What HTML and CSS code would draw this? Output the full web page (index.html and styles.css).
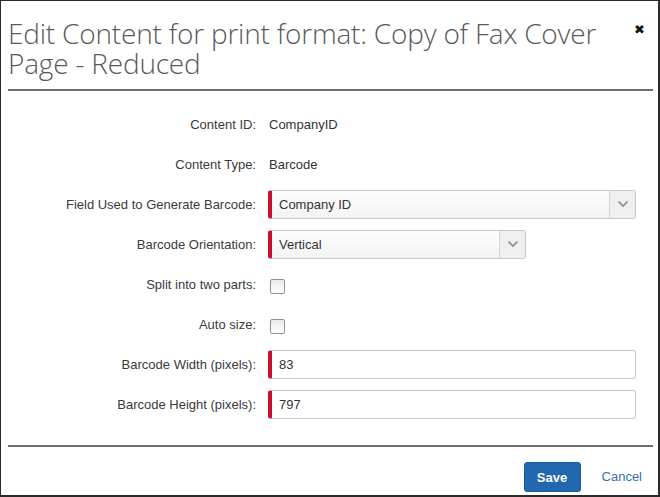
FILE: index.html
```html
<!DOCTYPE html>
<html>
<head>
<meta charset="utf-8">
<link rel="stylesheet" href="styles.css">
</head>
<body>
<div class="dialog">
  <div class="header">
    <h1 class="title">Edit Content for print format: Copy of Fax Cover Page - Reduced</h1>
    <span class="close">&#x2716;</span>
  </div>
  <div class="form">
    <div class="row">
      <div class="label">Content ID:</div>
      <div class="value">CompanyID</div>
    </div>
    <div class="row">
      <div class="label">Content Type:</div>
      <div class="value">Barcode</div>
    </div>
    <div class="row">
      <div class="label">Field Used to Generate Barcode:</div>
      <div class="value">
        <div class="select select-wide">
          <span class="select-text">Company ID</span>
          <span class="select-arrow"><svg width="12" height="8" viewBox="0 0 12 8"><path d="M1.5 1.5 L6 6 L10.5 1.5" fill="none" stroke="#8a8a8a" stroke-width="1.6"/></svg></span>
        </div>
      </div>
    </div>
    <div class="row">
      <div class="label">Barcode Orientation:</div>
      <div class="value">
        <div class="select select-narrow">
          <span class="select-text">Vertical</span>
          <span class="select-arrow"><svg width="12" height="8" viewBox="0 0 12 8"><path d="M1.5 1.5 L6 6 L10.5 1.5" fill="none" stroke="#8a8a8a" stroke-width="1.6"/></svg></span>
        </div>
      </div>
    </div>
    <div class="row">
      <div class="label">Split into two parts:</div>
      <div class="value"><span class="checkbox"></span></div>
    </div>
    <div class="row">
      <div class="label">Auto size:</div>
      <div class="value"><span class="checkbox"></span></div>
    </div>
    <div class="row">
      <div class="label">Barcode Width (pixels):</div>
      <div class="value"><div class="input">83</div></div>
    </div>
    <div class="row">
      <div class="label">Barcode Height (pixels):</div>
      <div class="value"><div class="input">797</div></div>
    </div>
  </div>
  <div class="footer">
    <button class="btn-save">Save</button>
    <span class="btn-cancel">Cancel</span>
  </div>
</div>
</body>
</html>
```
FILE: styles.css
```css
* { box-sizing: border-box; }
html, body { margin: 0; padding: 0; background: #fff; }
.dialog {
  width: 660px;
  height: 497px;
  border: 1px solid #2b2b2b;
  border-width: 1px 2px 2px 1px;
  display: flex;
  flex-direction: column;
  font-family: "Liberation Sans", Arial, sans-serif;
}
.header {
  margin: 0 5px 0 7px;
  padding-top: 17px;
  border-bottom: 2px solid #6e6e6e;
  height: 90px;
  display: flex;
  align-items: flex-start;
}
.title {
  margin: 0;
  flex: 1;
  font-family: "Open Sans", sans-serif;
  font-weight: 300;
  font-size: 28px;
  line-height: 30px;
  color: #5a5a5a;
  letter-spacing: -0.2px;
}
.close {
  font-size: 13px;
  color: #111;
  margin-top: 4px;
  margin-right: 8px;
  font-family: "DejaVu Sans", sans-serif;
}
.form {
  padding-top: 13px;
  height: 356px;
  border-bottom: 2px solid #6e6e6e;
  margin: 0 5px 0 7px;
}
.row {
  display: flex;
  align-items: center;
  height: 40px;
}
.label {
  width: 250px;
  text-align: right;
  font-size: 13px;
  color: #3a3a3a;
  padding-right: 2px;
}
.value {
  margin-left: 11px;
  font-size: 13px;
  color: #333;
  display: flex;
  align-items: center;
}
.select, .input {
  height: 29px;
  border: 1px solid #c9c9c9;
  border-left: 4px solid #c8102e;
  border-radius: 3px;
  background: linear-gradient(#fdfdfd, #f3f3f3);
  display: flex;
  align-items: center;
  font-size: 13px;
  color: #333;
}
.select-wide { width: 368px; margin-left: -1px; }
.select-narrow { width: 258px; margin-left: -1px; }
.select-text { flex: 1; padding-left: 7px; }
.select-arrow {
  width: 26px;
  height: 100%;
  border-left: 1px solid #d4d4d4;
  background: #efefef;
  display: flex;
  align-items: center;
  justify-content: center;
  border-radius: 0 2px 2px 0;
}
.input {
  width: 368px;
  margin-left: -1px;
  background: #fff;
  padding-left: 7px;
}
.checkbox {
  display: block;
  width: 15px;
  height: 15px;
  margin-left: 1px;
  margin-top: 4px;
  border: 1px solid #8f8f8f;
  border-radius: 2px;
  background: linear-gradient(#eaeaea, #fdfdfd);
}
.footer {
  flex: 1;
  display: flex;
  justify-content: flex-end;
  align-items: flex-start;
  padding-right: 16px;
  padding-top: 15px;
}
.btn-save {
  width: 57px;
  height: 30px;
  border: 1px solid #1b5b9a;
  border-radius: 3px;
  background: #2268b1;
  color: #fff;
  font-family: "Liberation Sans", Arial, sans-serif;
  font-size: 13px;
  font-weight: bold;
  padding: 0;
}
.btn-cancel {
  margin-left: 21px;
  margin-top: 7px;
  font-size: 13px;
  color: #3670ab;
}
```
